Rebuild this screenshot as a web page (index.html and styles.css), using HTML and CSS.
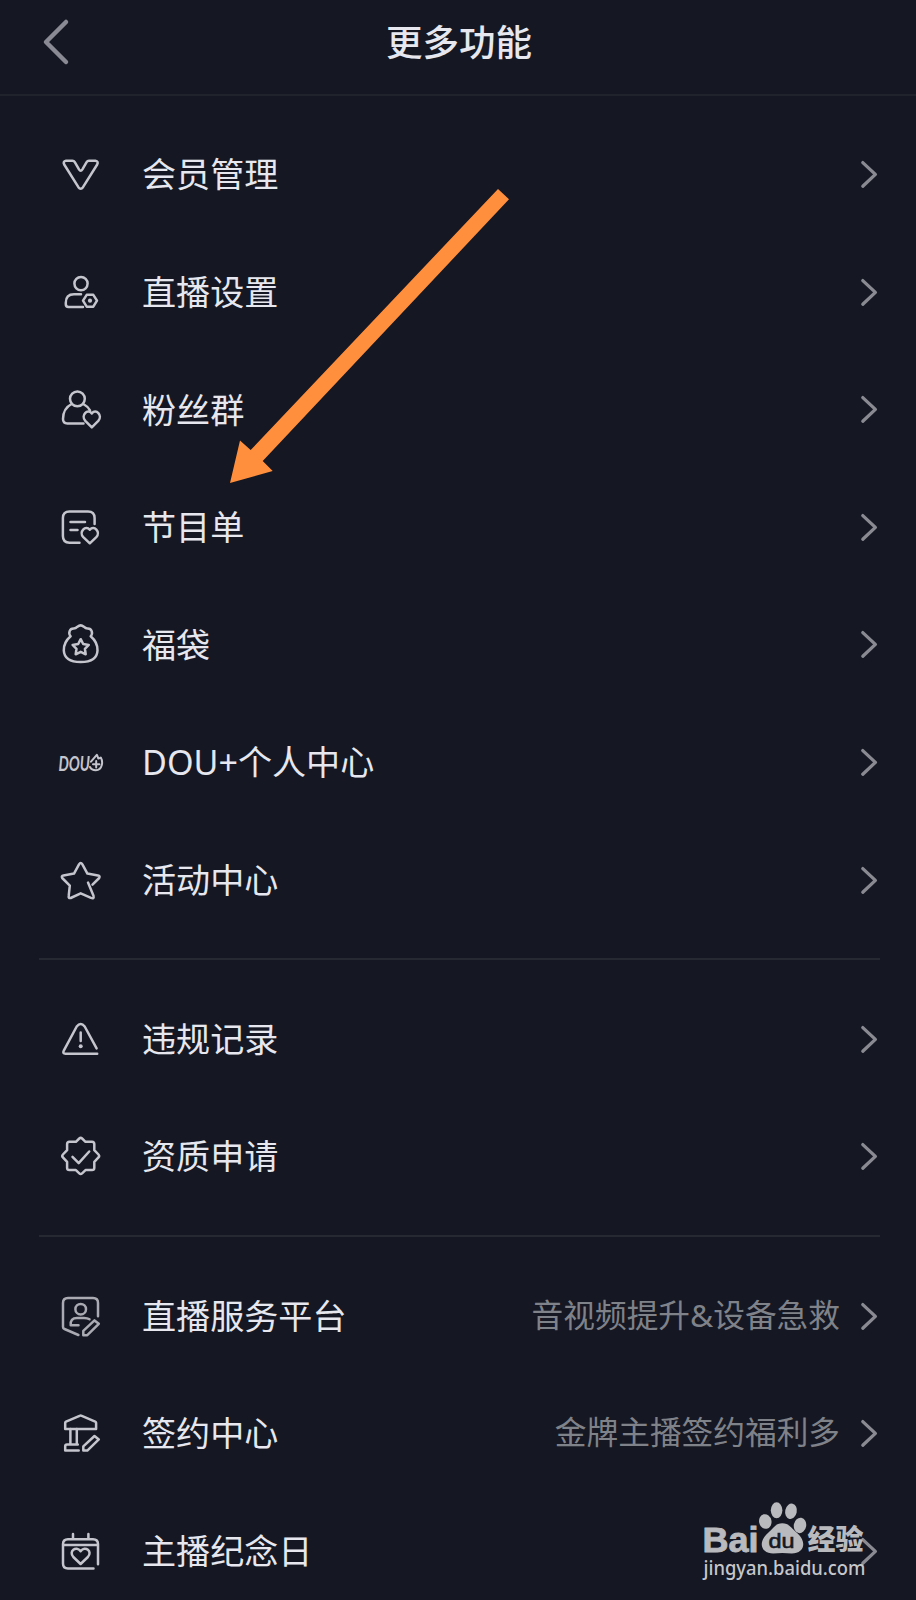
FILE: index.html
```
<!DOCTYPE html>
<html lang="zh-CN">
<head>
    <meta charset="UTF-8">
    <meta name="viewport" content="width=device-width, initial-scale=1.0">
    <title>更多功能</title>
    <link rel="stylesheet" href="styles.css">
</head>
<body>
    <svg class="defs" width="0" height="0">
        <symbol id="arrow-right" viewBox="0 0 18 30">
            <path d="M2.8 3.6 L15.4 15.4 L2.8 27.2"/>
        </symbol>
    </svg>

    <div class="page">
        <header class="header">
            <svg class="back" viewBox="0 0 28 48"><path d="M24 4 L4 24 L24 44"/></svg>
            <h1>更多功能</h1>
        </header>

        <ul class="group">
            <li class="row">
                <svg class="icon" viewBox="0 0 48 48"><path d="M10 10.8 H16.5 Q18 10.8 18.8 12.1 L23 19.4 Q24.7 22 26.4 19.4 L30.6 12.1 Q31.4 10.8 32.9 10.8 H39.4 Q42.8 11.3 41.2 14.5 L27 37.2 Q24.7 40.4 22.4 37.2 L8.2 14.5 Q6.6 11.3 10 10.8 Z"/></svg>
                <span class="label">会员管理</span>
                <svg class="arrow"><use href="#arrow-right"/></svg>
            </li>
            <li class="row">
                <svg class="icon" viewBox="0 0 48 48">
                    <circle cx="25" cy="15.6" r="6.6"/>
                    <path d="M25 26.3 H18 Q9.8 26.3 9.8 34.8 V36.3 Q9.8 39 12.5 39 H27"/>
                    <path d="M30.7 26.8 H37.3 L41 32.7 L37.3 38.7 H30.7 L27 32.7 Z"/>
                    <circle class="dot" cx="34" cy="32.7" r="2.1"/>
                </svg>
                <span class="label">直播设置</span>
                <svg class="arrow"><use href="#arrow-right"/></svg>
            </li>
            <li class="row">
                <svg class="icon" viewBox="0 0 48 48">
                    <circle cx="21.4" cy="13.8" r="7.4"/>
                    <path d="M15.6 19 Q7 23.5 7 34 Q7 38.4 11.3 38.4 H27.5 M27.3 19 Q31.8 21.4 34 25.3"/>
                    <path d="M35.8 42.3 L29.3 35.8 C24.5 30.5 31.5 23 35.8 28.5 C40 23 47 30.5 42.3 35.8 Z"/>
                </svg>
                <span class="label">粉丝群</span>
                <svg class="arrow"><use href="#arrow-right"/></svg>
            </li>
            <li class="row">
                <svg class="icon" viewBox="0 0 48 48">
                    <path d="M38.6 21 V15 Q38.6 8.4 32 8.4 H13.5 Q6.9 8.4 6.9 15 V33 Q6.9 39.7 13.5 39.7 H23.5 M14.5 19 H29 M14.5 27 H21.5"/>
                    <path d="M33.8 40.3 L27.3 34.2 C22.5 29 29.5 21.5 33.8 26.8 C38 21.5 45 29 40.3 34.2 Z"/>
                </svg>
                <span class="label">节目单</span>
                <svg class="arrow"><use href="#arrow-right"/></svg>
            </li>
            <li class="row">
                <svg class="icon" viewBox="0 0 48 48">
                    <path d="M14.6 16.3 C12 13 13.5 8.3 17.8 8.5 C19.5 8.5 20.5 7.7 21.5 6.7 Q24.7 4 27.8 6.7 C28.8 7.7 29.8 8.5 31.5 8.5 C35.8 8.3 37.3 13 34.7 16.3 C39 20 41.7 25.5 41.5 30.5 C41.2 38 35 42 24.7 42 C14.3 42 8.2 38 7.8 30.5 C7.6 25.5 10.3 20 14.6 16.3 Z"/>
                    <path d="M24.7 19.2 L27.2 24 L32.8 24.9 L28.9 28.8 L29.7 34.3 L24.7 31.8 L19.7 34.3 L20.5 28.8 L16.6 24.9 L22.2 24 Z"/>
                </svg>
                <span class="label">福袋</span>
                <svg class="arrow"><use href="#arrow-right"/></svg>
            </li>
            <li class="row">
                <svg class="icon" viewBox="0 0 48 48">
                    <text class="dou" x="2.4" y="32.8" textLength="31.5" lengthAdjust="spacingAndGlyphs">DOU</text>
                    <path class="thin" d="M35 23.7 Q38 20 40.8 16.8 Q42 19 42.3 20.5 Q43.8 20.2 44.8 19.5 Q46.8 23 45.8 27 Q44.5 32.2 39.8 32.2 Q35.5 32.2 34 29 M37 26.2 H43.4 M40.2 23 V29.4"/>
                </svg>
                <span class="label">DOU+个人中心</span>
                <svg class="arrow"><use href="#arrow-right"/></svg>
            </li>
            <li class="row">
                <svg class="icon" viewBox="0 0 48 48"><path d="M32 26.6 L37.5 39.8 Q38.3 43 35 41.9 L24.7 37.3 L14.7 42 Q12.3 42.6 12.7 40 L13.8 29.6 L6.2 22 Q5 19.9 7.5 19.4 L18 17.6 L23 8.4 Q24.7 5.8 26.4 8.4 L31.4 17.6 L41.9 19.4 Q44.4 19.9 43.2 22 L36.5 28.7"/></svg>
                <span class="label">活动中心</span>
                <svg class="arrow"><use href="#arrow-right"/></svg>
            </li>
        </ul>

        <ul class="group">
            <li class="row">
                <svg class="icon" viewBox="0 0 48 48">
                    <path d="M41.2 38.8 H9.6 Q6.2 38.6 7.8 35.6 L20.7 11.5 Q24.7 6.4 28.7 11.5 L40.6 33.4 M24.7 17.5 V26"/>
                    <circle class="dot" cx="24.7" cy="31.2" r="2"/>
                </svg>
                <span class="label">违规记录</span>
                <svg class="arrow"><use href="#arrow-right"/></svg>
            </li>
            <li class="row">
                <svg class="icon" viewBox="0 0 48 48">
                    <path d="M23.3 6.5 Q24.7 5.2 26.1 6.5 L29.5 9.8 H36 Q38.2 10 38.3 12 V18.2 L42.5 22.5 Q43.8 23.9 42.5 25.3 L38.3 29.8 V36 Q38.2 38 36 38.1 H29.5 L26.1 41.3 Q24.7 42.6 23.3 41.3 L19.9 38.1 H13.4 Q11.2 38 11.1 36 V29.8 L6.9 25.3 Q5.6 23.9 6.9 22.5 L11.1 18.2 V12 Q11.2 10 13.4 9.8 H19.9 Z"/>
                    <path d="M16.5 24.8 L22.7 31.2 L33.2 19.5"/>
                </svg>
                <span class="label">资质申请</span>
                <svg class="arrow"><use href="#arrow-right"/></svg>
            </li>
        </ul>

        <ul class="group">
            <li class="row">
                <svg class="icon dim" viewBox="0 0 48 48">
                    <path d="M42 24.2 V11 Q42 6 37 6 H12 Q7 6 7 11 V35 Q7 36.4 8.5 37 L22.4 43"/>
                    <circle cx="24.7" cy="17.2" r="5.3"/>
                    <path d="M22.5 33.3 H14.7 Q14 26 21 26 H28 Q31.5 26 33.5 27.3"/>
                    <path d="M27.3 43.2 V38.8 L38.5 28.4 L42.8 31.8 L31.3 43.2 Z"/>
                </svg>
                <span class="label">直播服务平台</span>
                <span class="note">音视频提升&amp;设备急救</span>
                <svg class="arrow"><use href="#arrow-right"/></svg>
            </li>
            <li class="row">
                <svg class="icon" viewBox="0 0 48 48">
                    <path d="M9.2 20 V13.8 Q9.2 13 10 12.6 L23.6 6.8 Q24.7 6.4 25.8 6.8 L39.2 12.6 Q40.1 13 40.1 13.8 V20 Z"/>
                    <path d="M14.4 20 V35.6 M20.8 20 V35.6 M21.8 35.6 H11 Q9.2 35.6 9.2 37.4 V41.6 H22.7"/>
                    <path d="M27.3 41.6 V37.4 L38.5 27 L42.8 30.4 L31.3 41.6 Z"/>
                </svg>
                <span class="label">签约中心</span>
                <span class="note">金牌主播签约福利多</span>
                <svg class="arrow"><use href="#arrow-right"/></svg>
            </li>
            <li class="row">
                <svg class="icon" viewBox="0 0 48 48">
                    <path d="M37.5 41.6 H12 Q7 41.6 7 36.6 V17 Q7 12.2 12 12.2 H37 Q42 12.2 42 17 V37.3 M7 18 H42 M17 7 V12 M32.4 7 V12"/>
                    <path d="M24.6 37 L17.3 30 C12.3 24.5 20 18.3 24.6 24.2 C29.2 18.3 37 24.5 31.9 30 Z"/>
                </svg>
                <span class="label">主播纪念日</span>
                <svg class="arrow"><use href="#arrow-right"/></svg>
            </li>
        </ul>

        <!-- pointer to the programme list entry -->
        <svg class="pointer" viewBox="0 0 280 296">
            <polygon points="0,295 10,252.5 20.7,262 268,1 279,11.3 32.7,273 42.7,283"/>
        </svg>

        <svg class="watermark" viewBox="0 0 170 84">
            <text class="brand" x="1.5" y="51" textLength="56" lengthAdjust="spacingAndGlyphs">Bai</text>
            <ellipse cx="64.3" cy="20.5" rx="6.2" ry="7.4" transform="rotate(-12 64.3 20.5)"/>
            <ellipse cx="75.6" cy="9.3" rx="5.8" ry="8"/>
            <ellipse cx="90" cy="10.3" rx="5.8" ry="7.8" transform="rotate(12 90 10.3)"/>
            <ellipse cx="99" cy="24.4" rx="6.2" ry="7.8" transform="rotate(10 99 24.4)"/>
            <path d="M81.3 22.3 C88 22.3 90.5 27 95 31 C102.5 37 104.5 45 99.5 49.6 C95 54 88 52 81.3 52 C75 52 68 54 63.5 49.6 C58.5 45 60.5 37 68 31 C72.5 27 74.5 22.3 81.3 22.3 Z"/>
            <text class="du" x="67.5" y="47.4" textLength="26" lengthAdjust="spacingAndGlyphs">du</text>
            <text class="jingyan" x="106.5" y="49" textLength="56" lengthAdjust="spacingAndGlyphs">经验</text>
            <text class="site" x="2.5" y="73.5" textLength="162" lengthAdjust="spacingAndGlyphs">jingyan.baidu.com</text>
        </svg>
    </div>
</body>
</html>
```
FILE: styles.css
```
* {
    box-sizing: border-box;
}
body {
    margin: 0;
    background-color: #151722;
    color: #e6e7ef;
    font-family: "Noto Sans", "Noto Sans CJK SC", sans-serif;
}
.defs {
    position: absolute;
}
.page {
    position: relative;
    width: 916px;
    height: 1600px;
    overflow: hidden;
}
.header {
    display: grid;
    grid-template-columns: 80px 1fr 80px;
    align-items: center;
    height: 96px;
    padding-bottom: 11px;
    border-bottom: 2px solid #20222c;
}
.header h1 {
    margin: 0;
    padding-left: 2px;
    font-size: 36.5px;
    font-weight: 500;
    line-height: 54px;
    text-align: center;
}
.back {
    width: 28px;
    height: 48px;
    margin-left: 42px;
    fill: none;
    stroke: #898a93;
    stroke-width: 4.5;
    stroke-linecap: round;
    stroke-linejoin: round;
}
.group {
    list-style: none;
    margin: 0 36px 0 39px;
    padding: 20px 0;
    border-bottom: 2px solid #262832;
}
.header + .group {
    padding: 19.2px 0 19.5px;
}
.group:last-of-type {
    border-bottom: none;
}
.row {
    display: flex;
    align-items: center;
    height: 117.6px;
    padding: 0 2px 0 17px;
}
.icon {
    flex: none;
    width: 48px;
    height: 48px;
    margin-right: 38px;
    fill: none;
    stroke: #c4c5cd;
    stroke-width: 2.5;
    stroke-linecap: round;
    stroke-linejoin: round;
}
.icon.dim {
    stroke: #a9aab2;
}
.icon .dot {
    fill: #c4c5cd;
    stroke: none;
}
.icon .thin {
    stroke-width: 2;
}
.icon .dou {
    fill: #c4c5cd;
    stroke: none;
    font-family: Lato, sans-serif;
    font-size: 21.5px;
    font-style: italic;
    font-weight: 700;
}
.label {
    flex: 1;
    font-size: 34.1px;
    line-height: 50px;
}
.header + .group .label {
    padding-top: 1px;
}
.note {
    margin-right: 20px;
    padding-bottom: 2px;
    color: #808289;
    font-size: 31.7px;
    line-height: 46px;
}
.arrow {
    flex: none;
    width: 18px;
    height: 30px;
    fill: none;
    stroke: #898a92;
    stroke-width: 3.3;
    stroke-linecap: round;
    stroke-linejoin: round;
}
.pointer {
    position: absolute;
    left: 230px;
    top: 188px;
    width: 280px;
    height: 296px;
    fill: #ff8f3c;
}
.watermark {
    position: absolute;
    left: 701px;
    top: 1501px;
    width: 170px;
    height: 84px;
    fill: #b9babe;
}
.watermark .brand {
    font-family: "Liberation Sans", sans-serif;
    font-size: 35px;
    font-weight: bold;
    stroke: #b9babe;
    stroke-width: 0.9;
}
.watermark .du {
    fill: #151722;
    font-family: "Liberation Sans", sans-serif;
    font-size: 20px;
    stroke: #151722;
    stroke-width: 0.6;
}
.watermark .jingyan {
    font-family: "Noto Sans CJK SC", sans-serif;
    font-size: 28px;
    font-weight: 900;
}
.watermark .site {
    fill: #c6c7cb;
    font-size: 20px;
    font-weight: 500;
}
```
